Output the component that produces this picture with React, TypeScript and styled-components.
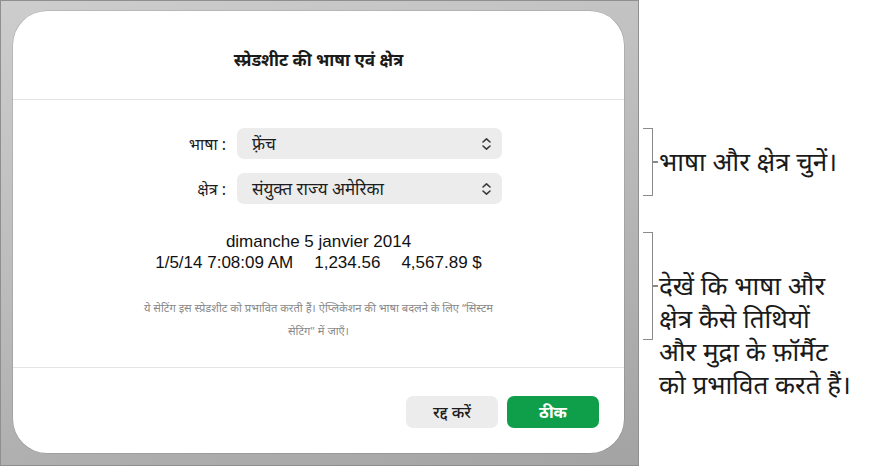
import React from "react";
import styled, { createGlobalStyle } from "styled-components";

const GlobalStyle = createGlobalStyle`
  html, body {
    margin: 0;
    padding: 0;
    background: #ffffff;
  }
  body {
    font-family: "Noto Sans", "Noto Sans Devanagari", "Liberation Sans", sans-serif;
    color: #1d1d1f;
  }
`;

const Page = styled.div`
  display: flex;
  width: 872px;
  height: 466px;
  overflow: hidden;
`;

// grey window backdrop behind the sheet
const Backdrop = styled.div`
  box-sizing: border-box;
  width: 639px;
  height: 466px;
  flex: none;
  padding: 10px 14px 12px 12px;
  border: 1px solid #8f8f8f;
  background: linear-gradient(165deg, #cdcdcd 0%, #bcbcbc 45%, #a3a3a3 100%);
  display: flex;
`;

const Sheet = styled.div`
  flex: 1;
  background: #ffffff;
  border-radius: 34px;
  box-shadow: 0 0 0 0.5px rgba(0, 0, 0, 0.18);
  display: flex;
  flex-direction: column;
  overflow: hidden;
`;

const Header = styled.div`
  height: 88px;
  display: flex;
  align-items: center;
  justify-content: center;
  border-bottom: 1px solid #e4e4e4;
`;

const Title = styled.h1`
  margin: 0;
  padding-top: 8px;
  font-size: 17px;
  font-weight: 700;
  color: #1a1a1a;
`;

const Body = styled.div`
  flex: 1;
  display: flex;
  flex-direction: column;
  padding-top: 28px;
  border-bottom: 1px solid #e4e4e4;
`;

const Form = styled.div`
  display: grid;
  grid-template-columns: 213px 265px;
  column-gap: 11px;
  row-gap: 14px;
  align-items: center;
`;

const Label = styled.label`
  justify-self: end;
  font-size: 16px;
  color: #1d1d1f;
`;

const Select = styled.div`
  box-sizing: border-box;
  height: 31px;
  border-radius: 7px;
  background: #ececec;
  display: flex;
  align-items: center;
  justify-content: space-between;
  padding: 0 10px 0 15px;
  font-size: 17px;
  color: #1d1d1f;
`;

const Preview = styled.div`
  margin-top: 27px;
  text-align: center;
  font-family: "Liberation Sans", "Inter", sans-serif;
  font-size: 17px;
  line-height: 21px;
  color: #111111;
`;

const Group = styled.span`
  & + & {
    margin-left: 21px;
  }
`;

const Note = styled.p`
  margin: 23px 0 0;
  text-align: center;
  font-size: 11.2px;
  line-height: 23px;
  color: #8a8a8a;
`;

const Footer = styled.div`
  height: 85px;
  display: flex;
  justify-content: flex-end;
  align-items: flex-start;
  gap: 9px;
  padding: 28px 25px 0 0;
  box-sizing: border-box;
`;

const Button = styled.button<{ $primary?: boolean }>`
  width: 92px;
  height: 32px;
  border: none;
  border-radius: 7px;
  font-family: inherit;
  font-size: 16px;
  font-weight: ${(p) => (p.$primary ? 700 : 500)};
  color: ${(p) => (p.$primary ? "#ffffff" : "#1d1d1f")};
  background: ${(p) => (p.$primary ? "#0f9f4b" : "#ececec")};
`;

const Callouts = styled.div`
  flex: 1;
  display: flex;
  flex-direction: column;
  padding: 128px 0 0 4px;
`;

const Callout = styled.div<{ $gap?: number }>`
  display: flex;
  align-items: flex-start;
  margin-top: ${(p) => p.$gap ?? 0}px;
`;

// square bracket opening to the left with a tick toward the text
const Bracket = styled.div<{ $h: number }>`
  position: relative;
  box-sizing: border-box;
  width: 10px;
  height: ${(p) => p.$h}px;
  flex: none;
  border: 1.5px solid #8a8a8a;
  border-left: none;

  &::after {
    content: "";
    position: absolute;
    left: 100%;
    top: 50%;
    width: 6px;
    height: 1.5px;
    margin-top: -0.75px;
    background: #8a8a8a;
  }
`;

const CalloutText = styled.div<{ $offset: number }>`
  margin: ${(p) => p.$offset}px 0 0 6px;
  font-size: 26px;
  line-height: 33px;
  color: #1a1a1a;
  white-space: nowrap;
`;

function Chevrons() {
  return (
    <svg width="11" height="14" viewBox="0 0 11 14" fill="none">
      <path
        d="M2 5 L5.5 1.8 L9 5 M2 9 L5.5 12.2 L9 9"
        stroke="#3a3a3a"
        strokeWidth="1.6"
        strokeLinecap="round"
        strokeLinejoin="round"
      />
    </svg>
  );
}

export default function App() {
  return (
    <Page>
      <GlobalStyle />
      <Backdrop>
        <Sheet>
          <Header>
            <Title>स्प्रेडशीट की भाषा एवं क्षेत्र</Title>
          </Header>
          <Body>
            <Form>
              <Label>भाषा :</Label>
              <Select>
                <span>फ़्रेंच</span>
                <Chevrons />
              </Select>
              <Label>क्षेत्र :</Label>
              <Select>
                <span>संयुक्त राज्य अमेरिका</span>
                <Chevrons />
              </Select>
            </Form>
            <Preview>
              <div>dimanche 5 janvier 2014</div>
              <div>
                <Group>1/5/14 7:08:09 AM</Group>
                <Group>1,234.56</Group>
                <Group>4,567.89 $</Group>
              </div>
            </Preview>
            <Note>
              ये सेटिंग इस स्प्रेडशीट को प्रभावित करती हैं। ऐप्लिकेशन की भाषा बदलने के लिए “सिस्टम
              <br />
              सेटिंग" में जाएँ।
            </Note>
          </Body>
          <Footer>
            <Button>रद्द करें</Button>
            <Button $primary>ठीक</Button>
          </Footer>
        </Sheet>
      </Backdrop>
      <Callouts>
        <Callout>
          <Bracket $h={68} />
          <CalloutText $offset={17}>भाषा और क्षेत्र चुनें।</CalloutText>
        </Callout>
        <Callout $gap={36}>
          <Bracket $h={108} />
          <CalloutText $offset={37}>
            देखें कि भाषा और
            <br />
            क्षेत्र कैसे तिथियों
            <br />
            और मुद्रा के फ़ॉर्मैट
            <br />
            को प्रभावित करते हैं।
          </CalloutText>
        </Callout>
      </Callouts>
    </Page>
  );
}
